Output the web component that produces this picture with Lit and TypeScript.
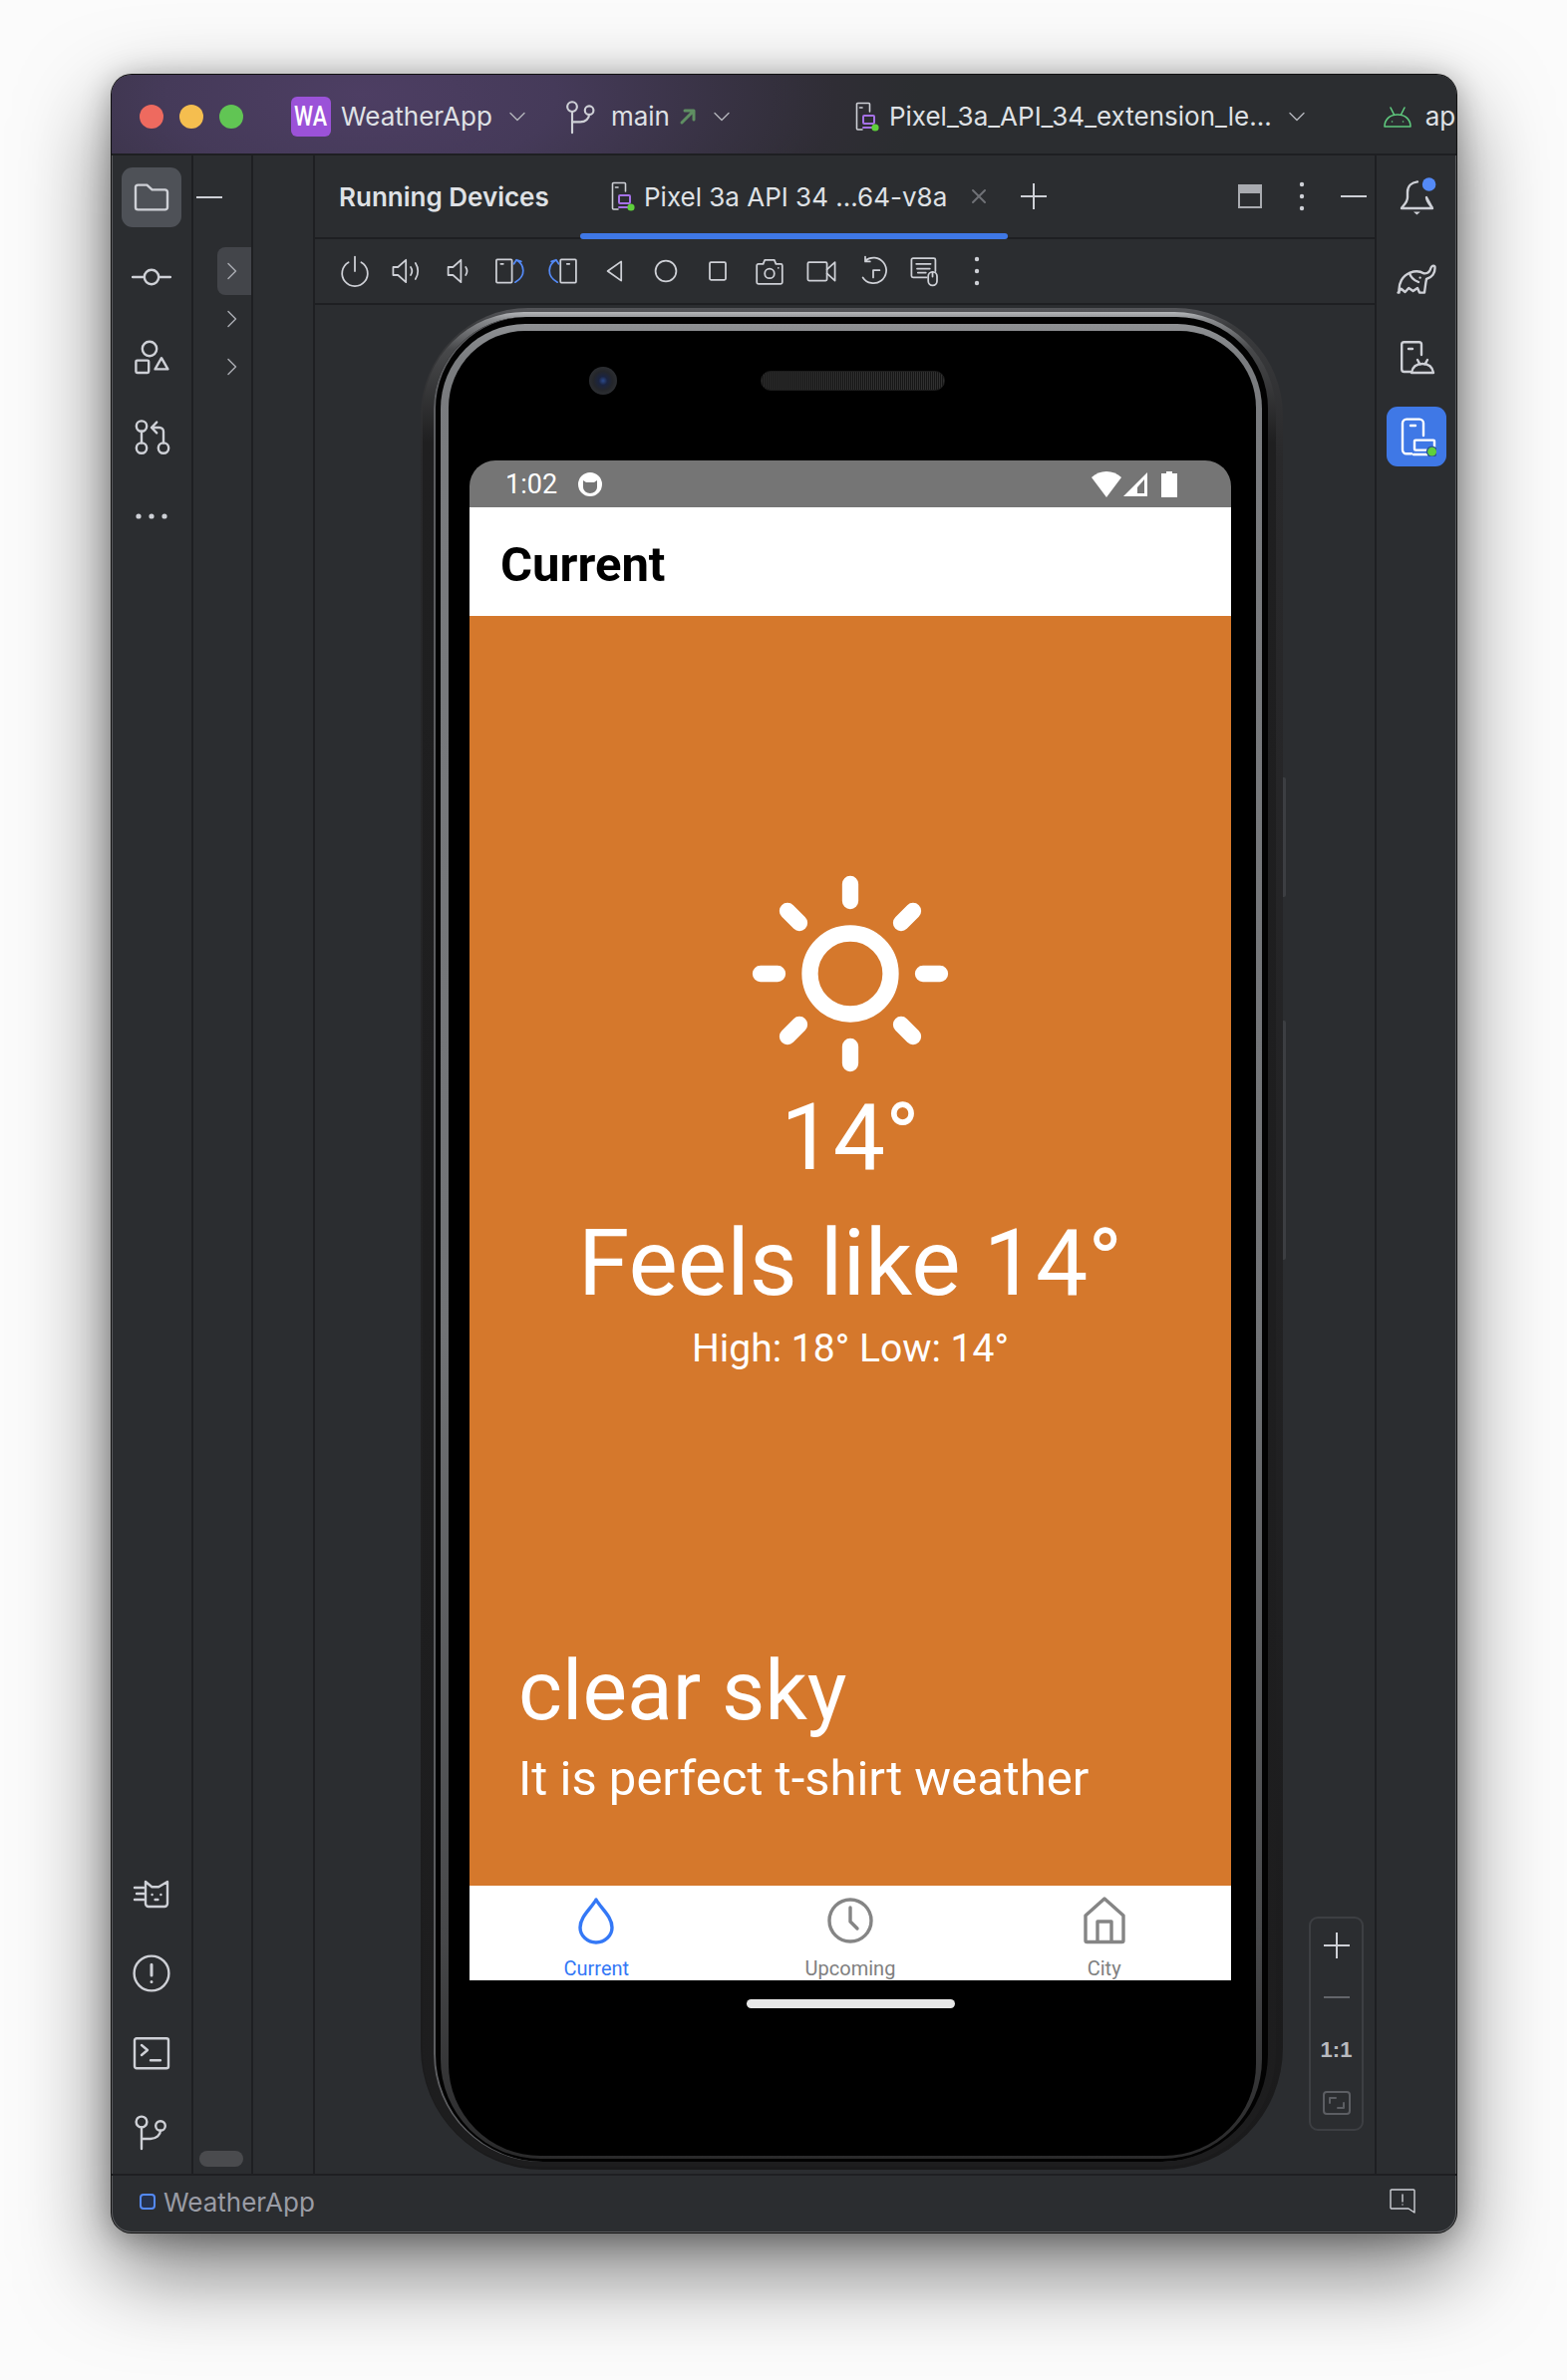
import { LitElement, css, html } from 'lit';
import { customElement } from 'lit/decorators.js';

const chevronDown = html`<svg class="chev" viewBox="0 0 20 20"><path d="M3 6.5l7 7 7-7" /></svg>`;
const chevronRight = html`<svg class="chev-r" viewBox="0 0 20 20"><path d="M6 2.5l7.5 7.5L6 17.5" /></svg>`;

const branchIcon = html`<svg class="ic" viewBox="0 0 20 20">
  <circle cx="5" cy="4.5" r="2.7" /><circle cx="14.5" cy="6.5" r="2.4" />
  <path d="M5 7.2V18M5 13h4.5c3 0 5-2 5-4.2" />
</svg>`;

const deviceIcon = html`<svg class="dev" viewBox="0 0 24 30">
  <path class="g" d="M7 28H2.5a1 1 0 0 1-1-1V2.5a1 1 0 0 1 1-1h11a1 1 0 0 1 1 1V10" />
  <path class="g" d="M4.5 6h2.5" />
  <rect class="p" x="8" y="14" width="11" height="8" rx="1" />
  <path class="p" d="M8 26h10" />
  <circle class="dot" cx="20" cy="26" r="3.6" />
</svg>`;

const threeDots = html`<svg class="vdots" viewBox="0 0 6 30">
  <circle cx="3" cy="3" r="2.2" /><circle cx="3" cy="15" r="2.2" /><circle cx="3" cy="27" r="2.2" />
</svg>`;

@customElement('app-root')
export class AppRoot extends LitElement {
  static styles = css`
    :host {
      display: block;
      width: 1572px;
      height: 2388px;
      box-sizing: border-box;
      padding: 75px 111px 0 112px;
      background: #fbfbfb;
      font-family: Inter, 'Liberation Sans', sans-serif;
      overflow: hidden;
    }
    svg {
      display: block;
      fill: none;
      stroke: #ced0d6;
      stroke-width: 1.2;
      stroke-linecap: round;
      stroke-linejoin: round;
      flex: none;
    }
    .ic {
      width: 40px;
      height: 40px;
    }
    .window {
      width: 1349px;
      height: 2165px;
      display: flex;
      flex-direction: column;
      background: #2b2d30;
      border-radius: 20px;
      box-shadow: 0 0 0 1px #111, inset 0 0 0 1px #5a5b5e, 0 36px 90px rgba(0, 0, 0, 0.55),
        0 4px 30px rgba(0, 0, 0, 0.3);
      overflow: hidden;
    }
    .title {
      height: 81px;
      flex: none;
      box-sizing: border-box;
      display: flex;
      align-items: center;
      color: #dfe1e5;
      font-size: 26px;
      white-space: nowrap;
      background: radial-gradient(ellipse 560px 240px at 250px 20px, #4d3e63 0%, #453a59 35%, #2f2d35 85%, #2b2d30 100%);
      box-shadow: inset 0 -2px 0 #1e1f22;
      padding: 2px 0 0 28px;
    }
    .lights {
      display: flex;
      gap: 16px;
    }
    .lights i {
      width: 24px;
      height: 24px;
      border-radius: 50%;
    }
    .badge {
      width: 40px;
      height: 40px;
      margin-left: 48px;
      border-radius: 6px;
      background: #9b52d8;
      color: #fff;
      font: 500 27px Roboto, sans-serif;
      display: flex;
      align-items: center;
      justify-content: center;
    }
    .badge span {
      display: block;
      transform: scaleX(0.8);
    }
    .app-name {
      margin-left: 10px;
    }
    .chev {
      width: 20px;
      height: 20px;
      stroke: #b4b6bc;
      stroke-width: 1.4;
      margin-left: 15px;
    }
    .branch {
      margin-left: 36px;
      width: 36px;
      height: 36px;
    }
    .branch-name {
      margin-left: 12px;
    }
    .arrow {
      width: 18px;
      height: 18px;
      stroke: #5f8f62;
      stroke-width: 3;
      margin-left: 9px;
    }
    .dev {
      width: 24px;
      height: 30px;
    }
    .g {
      stroke: #ced0d6;
      stroke-width: 1.6;
    }
    .p {
      stroke: #a571e6;
      stroke-width: 2;
    }
    .dot {
      fill: #5fd03c;
      stroke: none;
    }
    .title .dev {
      margin-left: 124px;
    }
    .run-name {
      margin-left: 10px;
    }
    .droid {
      width: 30px;
      height: 24px;
      stroke: #5fc97e;
      stroke-width: 1.6;
      margin-left: 76px;
    }
    .ap {
      margin-left: 13px;
    }
    .body {
      flex: 1;
      min-height: 0;
      display: flex;
    }
    .stripe {
      flex: none;
      display: flex;
      flex-direction: column;
      align-items: center;
      gap: 20px;
      padding: 12px 0 11px;
      box-sizing: border-box;
    }
    .stripe.left {
      width: 82px;
      border-right: 2px solid #1e1f22;
    }
    .stripe.right {
      width: 82px;
      border-left: 2px solid #1e1f22;
    }
    .spacer {
      flex: 1;
    }
    .btn {
      width: 60px;
      height: 60px;
      flex: none;
      display: flex;
      align-items: center;
      justify-content: center;
      border-radius: 11px;
    }
    .btn.on {
      background: #4e5157;
    }
    .btn.blue {
      background: #3f78e6;
    }
    .tree {
      width: 58px;
      flex: none;
      border-right: 2px solid #1e1f22;
      display: flex;
      flex-direction: column;
    }
    .hide {
      width: 26px;
      height: 2px;
      background: #ced0d6;
      margin: 41px 0 0 3px;
    }
    .rows {
      margin: 49px 0 0 24px;
    }
    .row {
      width: 34px;
      height: 48px;
      display: flex;
      align-items: center;
      padding-left: 5px;
      box-sizing: border-box;
      border-radius: 8px 0 0 8px;
    }
    .row.on {
      background: #43454a;
    }
    .chev-r {
      width: 20px;
      height: 20px;
      stroke: #a8aab0;
      stroke-width: 1.5;
    }
    .pill {
      width: 44px;
      height: 16px;
      border-radius: 8px;
      background: #4a4b4e;
      margin: auto 0 7px 6px;
    }
    .empty {
      width: 60px;
      flex: none;
      border-right: 2px solid #1e1f22;
    }
    .main {
      flex: 1;
      min-width: 0;
      display: flex;
      flex-direction: column;
    }
    .tabs {
      height: 84px;
      flex: none;
      box-sizing: border-box;
      display: flex;
      align-items: center;
      border-bottom: 2px solid #1e1f22;
      padding-left: 24px;
      color: #dfe1e5;
      font-size: 26px;
      white-space: nowrap;
    }
    .tabs b {
      font-weight: 600;
      width: 218px;
    }
    .tab {
      position: relative;
      width: 429px;
      height: 100%;
      margin-left: 24px;
      box-sizing: border-box;
      padding-left: 31px;
      display: flex;
      align-items: center;
    }
    .tab::after {
      content: '';
      position: absolute;
      left: 0;
      right: 0;
      bottom: -2px;
      height: 6px;
      border-radius: 3px;
      background: #3f78e6;
    }
    .tab-text {
      margin-left: 9px;
    }
    .x {
      width: 16px;
      height: 16px;
      margin-left: -37px;
      stroke: #6f7176;
      stroke-width: 2;
    }
    .plus {
      width: 26px;
      height: 26px;
      margin-left: 34px;
      stroke: #ced0d6;
      stroke-width: 2;
    }
    .tab-tools {
      display: flex;
      align-items: center;
      margin-left: auto;
      padding-right: 8px;
    }
    .layout {
      width: 24px;
      height: 24px;
      box-sizing: border-box;
      border: 2px solid #a9abb0;
      border-top-width: 9px;
      margin-right: 37px;
    }
    .vdots {
      width: 6px;
      height: 30px;
      stroke: none;
      fill: #ced0d6;
    }
    .hline {
      width: 26px;
      height: 2px;
      background: #ced0d6;
      margin-left: 36px;
    }
    .tools {
      height: 66px;
      flex: none;
      box-sizing: border-box;
      display: flex;
      align-items: center;
      border-bottom: 2px solid #1e1f22;
      padding-left: 14px;
    }
    .tool {
      width: 52px;
      height: 40px;
      display: flex;
      align-items: center;
      justify-content: center;
    }
    .tool svg {
      width: 32px;
      height: 32px;
      stroke-width: 1.1;
    }
    .tool svg.vdots {
      width: 6px;
      height: 30px;
    }
    .blue-s {
      stroke: #548af7;
    }
    .view {
      flex: 1;
      min-height: 0;
      position: relative;
      padding: 3px 0 0 106px;
    }
    .phone {
      position: relative;
      width: 865px;
      height: 1868px;
      box-sizing: border-box;
      padding: 4px 7px 3px 2px;
      border-radius: 108px 108px 122px 122px;
      background: linear-gradient(#55565a 0, #3a3b3d 1%, #29292b 8%, #1a1a1b 100%);
    }
    .side-btn {
      position: absolute;
      left: 100%;
      width: 3px;
      background: #3c3e42;
      border-radius: 0 2px 2px 0;
    }
    .shell {
      height: 100%;
      box-sizing: border-box;
      padding: 5px 8px 5px 11px;
      border-radius: 102px 102px 116px 116px;
      background: linear-gradient(#b4b6b9 0, #8a8c8f 0.4%, #48494b 2%, #1f1f20 7%, #1d1d1e 100%);
    }
    .ring {
      height: 100%;
      box-sizing: border-box;
      padding: 7px 6px 3px 7px;
      border-radius: 92px 92px 108px 108px;
      background: #020202;
      box-shadow: inset 2px 0 0 #5c5d60;
    }
    .ring2 {
      height: 100%;
      box-sizing: border-box;
      padding: 7px 6px 3px 8px;
      border-radius: 85px 85px 100px 100px;
      background: linear-gradient(#8f9194 0, #7a7c7f 2%, #717376 55%, #47484a 88%, #2a2a2b 100%);
    }
    .device {
      height: 100%;
      box-sizing: border-box;
      border-radius: 77px 77px 92px 92px;
      background: #000;
      padding: 0 25px 0 21px;
      display: flex;
      flex-direction: column;
    }
    .sensors {
      height: 130px;
      flex: none;
      display: flex;
      align-items: flex-start;
      padding-left: 120px;
    }
    .cam {
      width: 28px;
      height: 28px;
      margin-top: 36px;
      border-radius: 50%;
      background: radial-gradient(circle, #2c4a8c 0, #1b2440 22%, #24262b 48%, #2c2e32 70%, #111 100%);
    }
    .speaker {
      width: 185px;
      height: 20px;
      margin: 40px 0 0 144px;
      border-radius: 10px;
      border: 1px solid #1c1c1c;
      box-sizing: border-box;
      background: repeating-linear-gradient(90deg, #303030 0 1px, #161616 1px 2px);
    }
    .screen {
      height: 1525px;
      flex: none;
      display: flex;
      flex-direction: column;
      border-radius: 26px 26px 0 0;
      overflow: hidden;
      font-family: Roboto, 'Liberation Sans', sans-serif;
    }
    .sbar {
      height: 47px;
      flex: none;
      background: #757575;
      display: flex;
      align-items: center;
      padding: 0 54px 0 36px;
      color: #fff;
      font-size: 27px;
    }
    .sbar svg {
      stroke: none;
      fill: #fff;
    }
    .face {
      width: 26px;
      height: 26px;
      margin-left: 20px;
    }
    .sright {
      margin-left: auto;
      display: flex;
      align-items: center;
    }
    .wifi {
      width: 30px;
      height: 26px;
    }
    .signal {
      width: 24px;
      height: 24px;
      margin-left: 2px;
    }
    .battery {
      width: 16px;
      height: 26px;
      margin-left: 14px;
    }
    .appbar {
      height: 109px;
      flex: none;
      box-sizing: border-box;
      background: #fff;
      display: flex;
      align-items: center;
      padding: 5px 0 0 31px;
      font-size: 49px;
      font-weight: 700;
      color: #000;
    }
    .hero {
      flex: 1;
      min-height: 0;
      background: #d5782c;
      color: #fff;
      display: flex;
      flex-direction: column;
      align-items: center;
      padding-top: 259px;
      box-sizing: border-box;
    }
    .sun {
      width: 200px;
      height: 200px;
      stroke: #fff;
      stroke-width: 16.3;
    }
    .temp {
      font-size: 93px;
      font-weight: 400;
      line-height: 112px;
      margin-top: 9px;
    }
    .feels {
      font-size: 93px;
      font-weight: 400;
      line-height: 112px;
      margin-top: 14px;
    }
    .range {
      font-size: 39px;
      line-height: 48px;
      margin-top: 5px;
    }
    .desc {
      align-self: stretch;
      margin-top: auto;
      padding: 0 0 75px 49px;
    }
    .sky {
      font-size: 84px;
      line-height: 104px;
    }
    .hint {
      font-size: 49px;
      line-height: 64px;
      margin-top: 4px;
    }
    .nav {
      height: 95px;
      flex: none;
      background: #fff;
      display: grid;
      grid-template-columns: repeat(3, 1fr);
    }
    .nav-item {
      display: flex;
      flex-direction: column;
      align-items: center;
      color: #808080;
      font-size: 20px;
      line-height: 24px;
      padding-top: 11px;
      overflow: hidden;
    }
    .nav-item svg {
      width: 48px;
      height: 48px;
      stroke: #858585;
      stroke-width: 3.4;
    }
    .nav-item.on {
      color: #3478f6;
    }
    .nav-item.on svg {
      stroke: #3478f6;
    }
    .nav-item span {
      margin-top: 12px;
    }
    .home-bar {
      width: 209px;
      height: 9px;
      margin: 19px auto 0;
      border-radius: 5px;
      background: #e8e8e8;
    }
    .zoom {
      position: absolute;
      right: 11px;
      top: 1617px;
      width: 55px;
      height: 215px;
      box-sizing: border-box;
      border: 2px solid #3d3f43;
      border-radius: 9px;
      display: flex;
      flex-direction: column;
      align-items: center;
      color: #b8babf;
      font: 800 22px 'Liberation Sans', sans-serif;
    }
    .zoom svg {
      stroke-width: 2;
    }
    .zplus {
      width: 26px;
      height: 26px;
      margin-top: 14px;
    }
    .zminus {
      width: 26px;
      height: 2px;
      background: #63656a;
      margin-top: 38px;
    }
    .zone {
      margin-top: 40px;
      line-height: 24px;
    }
    .zfit {
      width: 28px;
      height: 24px;
      margin-top: 29px;
      stroke: #5c5e63;
    }
    .status {
      height: 59px;
      flex: none;
      box-sizing: border-box;
      border-top: 2px solid #1e1f22;
      display: flex;
      align-items: center;
      padding: 0 40px 5px 28px;
      color: #9a9ca5;
      font-size: 26px;
    }
    .sq {
      width: 16px;
      height: 16px;
      box-sizing: border-box;
      border: 2px solid #548af7;
      background: #25324d;
      border-radius: 4px;
      margin-right: 8px;
    }
    .fb {
      width: 28px;
      height: 28px;
      margin-left: auto;
      stroke-width: 1.4;
    }
  `;

  render() {
    return html`
      <div class="window">
        <div class="title">
          <div class="lights">
            <i style="background:#ee6a5f"></i><i style="background:#f5be4f"></i><i style="background:#61c554"></i>
          </div>
          <div class="badge"><span>WA</span></div>
          <span class="app-name">WeatherApp</span>
          ${chevronDown}
          <svg class="branch" viewBox="0 0 20 20">
            <circle cx="5" cy="4.5" r="2.7" /><circle cx="14.5" cy="6.5" r="2.4" />
            <path d="M5 7.2V19M5 13h4.5c3 0 5-2 5-4.2" />
          </svg>
          <span class="branch-name">main</span>
          <svg class="arrow" viewBox="0 0 18 18"><path d="M3 15L14 4M6 3h9v9" /></svg>
          ${chevronDown}
          ${deviceIcon}
          <span class="run-name">Pixel_3a_API_34_extension_le...</span>
          ${chevronDown}
          <svg class="droid" viewBox="0 0 30 24">
            <path d="M2 22c0-7 5-12 13-12s13 5 13 12zM8 3l3.5 7M22 3l-3.5 7" />
            <path d="M9.5 17h.1M20.5 17h.1" />
          </svg>
          <span class="ap">ap</span>
        </div>

        <div class="body">
          <div class="stripe left">
            <div class="btn on">
              <svg class="ic" viewBox="0 0 20 20">
                <path d="M2 5a1.2 1.2 0 0 1 1.2-1.2h4.5l2.6 2.4h6.5A1.2 1.2 0 0 1 18 7.4V15a1.2 1.2 0 0 1-1.2 1.2H3.2A1.2 1.2 0 0 1 2 15z" />
              </svg>
            </div>
            <div class="btn">
              <svg class="ic" viewBox="0 0 20 20"><circle cx="10" cy="10" r="3.6" /><path d="M0.5 10h5.9M13.6 10h5.9" /></svg>
            </div>
            <div class="btn">
              <svg class="ic" viewBox="0 0 20 20">
                <circle cx="9" cy="6" r="3.6" />
                <rect x="2.2" y="11.8" width="6.4" height="6.2" rx="0.6" />
                <path d="M15 10.6l3.2 5.6h-6.4z" />
              </svg>
            </div>
            <div class="btn">
              <svg class="ic" viewBox="0 0 20 20">
                <circle cx="5" cy="4.8" r="2.6" /><circle cx="5" cy="15.8" r="2.6" /><circle cx="16" cy="15.8" r="2.6" />
                <path d="M5 7.4v5.8M16 13.2V7.5a2 2 0 0 0-2-2h-4M12.6 2.8L10 5.5l2.6 2.7" />
              </svg>
            </div>
            <div class="btn">
              <svg class="ic" viewBox="0 0 20 20">
                <path style="stroke-width:2.6" d="M3.5 10h.01M10 10h.01M16.5 10h.01" />
              </svg>
            </div>
            <div class="spacer"></div>
            <div class="btn">
              <svg class="ic" viewBox="0 0 20 20">
                <path d="M7 4l3.2 2.6h3.4L18 4v11a1.5 1.5 0 0 1-1.5 1.5H8.5A1.5 1.5 0 0 1 7 15zM1.5 7H6M2.5 10H6M1.5 13H6" />
                <path d="M10.3 10.5h.01M14.7 10.5h.01M11.8 13h1.4" />
              </svg>
            </div>
            <div class="btn">
              <svg class="ic" viewBox="0 0 20 20">
                <circle cx="10" cy="10" r="8.7" /><path style="stroke-width:1.5" d="M10 5.6v5.4M10 14.2v.01" />
              </svg>
            </div>
            <div class="btn">
              <svg class="ic" viewBox="0 0 20 20">
                <rect x="1.5" y="2.6" width="17" height="15" rx="1" /><path d="M5 6l3 2.5L5 11M9.5 13.6h5" />
              </svg>
            </div>
            <div class="btn">${branchIcon}</div>
          </div>

          <div class="tree">
            <div class="hide"></div>
            <div class="rows">
              <div class="row on">${chevronRight}</div>
              <div class="row">${chevronRight}</div>
              <div class="row">${chevronRight}</div>
            </div>
            <div class="pill"></div>
          </div>
          <div class="empty"></div>

          <div class="main">
            <div class="tabs">
              <b>Running Devices</b>
              <div class="tab">
                ${deviceIcon}
                <span class="tab-text">Pixel 3a API 34 ...64-v8a</span>
              </div>
              <svg class="x" viewBox="0 0 16 16"><path d="M2 2l12 12M14 2L2 14" /></svg>
              <svg class="plus" viewBox="0 0 26 26"><path d="M13 0v26M0 13h26" /></svg>
              <div class="tab-tools">
                <div class="layout"></div>
                ${threeDots}
                <div class="hline"></div>
              </div>
            </div>

            <div class="tools">
              <div class="tool"><svg viewBox="0 0 20 20"><path d="M6 4.5a8 8 0 1 0 8 0M10 1v9" /></svg></div>
              <div class="tool"><svg viewBox="0 0 20 20"><path d="M1.5 7.5h3L9.5 3v14l-5-4.5h-3zM12.5 7.5c1 1.5 1 3.5 0 5M15.5 5c2 3 2 7 0 10" /></svg></div>
              <div class="tool"><svg viewBox="0 0 20 20"><path d="M3.5 7.5h3L11.5 3v14l-5-4.5h-3zM14.5 7.5c1 1.5 1 3.5 0 5" /></svg></div>
              <div class="tool">
                <svg viewBox="0 0 20 20">
                  <rect x="1.2" y="2.8" width="9.8" height="14.4" rx="0.6" /><path d="M4 5.5h1.5" />
                  <path class="blue-s" d="M13.8 3l-1.6 2.5M13.8 3l3 1M13.8 3c5 3 6.5 10 -0.8 14" />
                </svg>
              </div>
              <div class="tool">
                <svg viewBox="0 0 20 20">
                  <rect x="8.9" y="2.8" width="9.8" height="14.4" rx="0.6" /><path d="M13 5.5h1.5" />
                  <path class="blue-s" d="M6.2 3l1.6 2.5M6.2 3l-3 1M6.2 3c-5 3 -6.5 10 0.8 14" />
                </svg>
              </div>
              <div class="tool"><svg viewBox="0 0 20 20"><path d="M14.5 4v12L6 10z" /></svg></div>
              <div class="tool"><svg viewBox="0 0 20 20"><circle cx="10" cy="10" r="6.5" /></svg></div>
              <div class="tool"><svg viewBox="0 0 20 20"><rect x="5" y="4.5" width="10" height="11" rx="0.8" /></svg></div>
              <div class="tool">
                <svg viewBox="0 0 20 20">
                  <path d="M2 6.5a1 1 0 0 1 1-1h3l1-2.5h6l1 2.5h3a1 1 0 0 1 1 1V17a1 1 0 0 1-1 1H3a1 1 0 0 1-1-1z" />
                  <circle cx="10" cy="11.5" r="3" /><path d="M15.5 8h.01" />
                </svg>
              </div>
              <div class="tool">
                <svg viewBox="0 0 20 20">
                  <rect x="1.5" y="4.5" width="12" height="11.5" rx="0.8" /><path d="M13.5 9l5-4.5v11.5l-5-4.5" />
                </svg>
              </div>
              <div class="tool">
                <svg viewBox="0 0 20 20">
                  <path d="M5 3.5a8 8 0 1 1-1.5 10.5M5 1v3h3" /><path d="M10 14V9.5h4" />
                </svg>
              </div>
              <div class="tool">
                <svg viewBox="0 0 20 20">
                  <path d="M11 14H2.5a1 1 0 0 1-1-1V3a1 1 0 0 1 1-1h13a1 1 0 0 1 1 1v7" />
                  <path d="M4.5 5.5h9M5 8.5h8M5.5 11h5" />
                  <rect x="12" y="10.5" width="5.5" height="8.5" rx="2.7" /><path d="M14.7 10.5v3" />
                </svg>
              </div>
              <div class="tool">${threeDots}</div>
            </div>

            <div class="view">
              <div class="phone">
                <div class="side-btn" style="top:471px;height:120px"></div>
                <div class="side-btn" style="top:715px;height:240px"></div>
                <div class="shell">
                  <div class="ring">
                    <div class="ring2">
                      <div class="device">
                        <div class="sensors">
                          <div class="cam"></div>
                          <div class="speaker"></div>
                        </div>
                        <div class="screen">
                          <div class="sbar">
                            <span>1:02</span>
                            <svg class="face" viewBox="0 0 26 26">
                              <path fill-rule="evenodd" d="M13 1a12 12 0 1 0 0 24 12 12 0 0 0 0-24zM6 9l3 2h8l3-2v7a7 6 0 0 1-14 0z" />
                            </svg>
                            <div class="sright">
                              <svg class="wifi" viewBox="0 0 30 26"><path d="M0 6c8-8 22-8 30 0L15 26z" /></svg>
                              <svg class="signal" viewBox="0 0 24 24"><path fill-rule="evenodd" d="M24 0v24H0zM21 7L14 15v6h7z" /></svg>
                              <svg class="battery" viewBox="0 0 16 26"><path d="M5 0h6v2h5v24H0V2h5z" /></svg>
                            </div>
                          </div>
                          <div class="appbar">Current</div>
                          <div class="hero">
                            <svg class="sun" viewBox="0 0 200 200">
                              <circle cx="100" cy="100" r="40.5" />
                              <path d="M100 10v17M100 173v17M10 100h17M173 100h17M37 37l12 12M163 37l-12 12M37 163l12-12M163 163l-12-12" />
                            </svg>
                            <div class="temp">14°</div>
                            <div class="feels">Feels like 14°</div>
                            <div class="range">High: 18° Low: 14°</div>
                            <div class="desc">
                              <div class="sky">clear sky</div>
                              <div class="hint">It is perfect t-shirt weather</div>
                            </div>
                          </div>
                          <div class="nav">
                            <div class="nav-item on">
                              <svg viewBox="0 0 48 48"><path d="M24 3C19 12 8 20 8 31a16 15 0 0 0 32 0C40 20 29 12 24 3z" /></svg>
                              <span>Current</span>
                            </div>
                            <div class="nav-item">
                              <svg viewBox="0 0 48 48"><circle cx="24" cy="24" r="21" /><path d="M24 11v14l7 7" /></svg>
                              <span>Upcoming</span>
                            </div>
                            <div class="nav-item">
                              <svg viewBox="0 0 48 48"><path d="M24 2L5 19v25a1.5 1.5 0 0 0 1.5 1.5h35A1.5 1.5 0 0 0 43 44V19zM17 45V25h14v20" /></svg>
                              <span>City</span>
                            </div>
                          </div>
                        </div>
                        <div class="home-bar"></div>
                      </div>
                    </div>
                  </div>
                </div>
              </div>

              <div class="zoom">
                <svg class="zplus" viewBox="0 0 26 26"><path d="M13 0v26M0 13h26" /></svg>
                <div class="zminus"></div>
                <div class="zone">1:1</div>
                <svg class="zfit" viewBox="0 0 28 24">
                  <rect x="1" y="1" width="26" height="22" rx="3" /><path d="M7 12V7h6M21 12v5h-6" />
                </svg>
              </div>
            </div>
          </div>

          <div class="stripe right">
            <div class="btn">
              <svg class="ic" viewBox="0 0 20 20">
                <path d="M2.5 15.5c0-.8 3-2.5 3-5.500V7.500c0-3 2-5 5-5.300M15 10c.2 3 3 4.700 3 5.500zM2.500 15.500H18" />
                <path style="fill:#ced0d6;stroke:none" d="M8.500 17.300h3.400L10.200 18.800z" />
                <circle cx="16.300" cy="3.500" r="3.400" style="fill:#548af7;stroke:none" />
              </svg>
            </div>
            <div class="btn">
              <svg class="ic" viewBox="0 0 20 20">
                <path d="M1.300 17.800C.8 13 3 9.300 6.800 7.800c2.600-1 5-.8 6.800 .3 1.600 .3 3-.5 3.600-2.600 .3-1 1.400-1.600 2-.8 .4 3.200-1.500 5.600-4.200 6.300-.4 2-.6 4-1 6.800h-2.500l-1-2.300-2.200 1.500-2.200-1.500-1.800 2-2-1.600-1.500 1.900z" />
                <path d="M6.500 8c.5 2 2 3.500 4.500 4.500M11.800 10.300h.01" />
              </svg>
            </div>
            <div class="btn">
              <svg class="ic" viewBox="0 0 20 20">
                <path d="M7 17.500H3.800a1.200 1.200 0 0 1-1.200-1.200V3.800a1.200 1.200 0 0 1 1.200-1.200h7.500a1.200 1.200 0 0 1 1.200 1.200V9M6 6h2" />
                <path d="M7.500 18h11c-.5-3-2.500-4.500-5.500-4.500s-5 1.500-5.500 4.500zM10.500 11.500l1.300 2.300M15.500 11.500l-1.300 2.300" />
              </svg>
            </div>
            <div class="btn blue">
              <svg class="ic" viewBox="0 0 20 20" style="stroke:#fff">
                <path d="M7.500 18.600H5a2 2 0 0 1-2-2V3.300a2 2 0 0 1 2-2h6.500a2 2 0 0 1 2 2V9.500M7 4.500h2.500" />
                <rect x="9" y="11.800" width="10" height="5" rx="0.500" /><path d="M8.500 19h7" />
                <circle cx="17.800" cy="17.600" r="2.900" style="fill:#2b4f96;stroke:none" />
                <circle cx="17.800" cy="17.600" r="2.200" style="fill:#5fd03c;stroke:none" />
              </svg>
            </div>
          </div>
        </div>

        <div class="status">
          <div class="sq"></div>
          <span>WeatherApp</span>
          <svg class="fb" viewBox="0 0 28 28">
            <path d="M3 2h22a1 1 0 0 1 1 1v22l-6-4H3a1 1 0 0 1-1-1V3a1 1 0 0 1 1-1z" />
            <path d="M14 7v7M14 17v.01" />
          </svg>
        </div>
      </div>
    `;
  }
}
